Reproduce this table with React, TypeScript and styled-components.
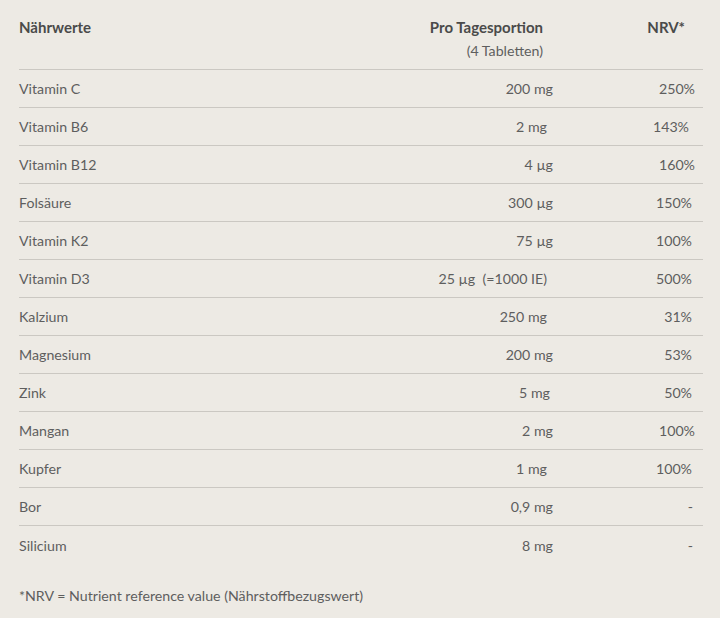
import React from "react";
import styled, { createGlobalStyle } from "styled-components";

const Global = createGlobalStyle`
  html, body { margin: 0; padding: 0; background: #edeae4; }
  body { font-family: Lato, "Noto Sans", sans-serif; }
`;

const Page = styled.div`
  width: 720px;
  height: 618px;
  background: #edeae4;
  padding: 0 17px 0 19px;
  box-sizing: border-box;
  color: #5e5e5e;
  font-size: 14.2px;
`;

const Table = styled.div`
  display: flex;
  flex-direction: column;
`;

const HeaderRow = styled.div`
  display: grid;
  grid-template-columns: 1fr 150px 150px;
  padding: 16px 0 7px;
  border-bottom: 1px solid #cbc8c2;
  line-height: 23px;
`;

const HeadCell = styled.div<{ $right?: boolean; $pr?: number }>`
  font-weight: 700;
  font-size: 15px;
  color: #4a4a4a;
  text-align: ${(p) => (p.$right ? "right" : "left")};
  padding-right: ${(p) => p.$pr ?? 0}px;
`;

const SubLine = styled.div`
  font-weight: 400;
  font-size: 14.2px;
  color: #5e5e5e;
`;

const Row = styled.div<{ $last?: boolean }>`
  display: grid;
  grid-template-columns: 1fr 150px 150px;
  align-items: center;
  height: 38px;
  box-sizing: border-box;
  border-bottom: ${(p) => (p.$last ? "none" : "1px solid #cbc8c2")};
`;

const NameCell = styled.div``;

const ValueCell = styled.div<{ $pr: number }>`
  text-align: right;
  padding-right: ${(p) => p.$pr}px;
  white-space: pre;
`;

const Footnote = styled.p`
  margin: 0;
  padding-top: 21px;
  line-height: 22px;
`;

type Item = { name: string; amount: string; ap: number; nrv: string; np: number };

const items: Item[] = [
  { name: "Vitamin C", amount: "200 mg", ap: 0, nrv: "250%", np: 8 },
  { name: "Vitamin B6", amount: "2 mg", ap: 6, nrv: "143%", np: 14 },
  { name: "Vitamin B12", amount: "4 µg", ap: 0, nrv: "160%", np: 8 },
  { name: "Folsäure", amount: "300 µg", ap: 0, nrv: "150%", np: 11 },
  { name: "Vitamin K2", amount: "75 µg", ap: 0, nrv: "100%", np: 11 },
  { name: "Vitamin D3", amount: "25 µg  (=1000 IE)", ap: 6, nrv: "500%", np: 11 },
  { name: "Kalzium", amount: "250 mg", ap: 6, nrv: "31%", np: 11 },
  { name: "Magnesium", amount: "200 mg", ap: 0, nrv: "53%", np: 11 },
  { name: "Zink", amount: "5 mg", ap: 3, nrv: "50%", np: 11 },
  { name: "Mangan", amount: "2 mg", ap: 0, nrv: "100%", np: 8 },
  { name: "Kupfer", amount: "1 mg", ap: 6, nrv: "100%", np: 11 },
  { name: "Bor", amount: "0,9 mg", ap: 0, nrv: "-", np: 10 },
  { name: "Silicium", amount: "8 mg", ap: 0, nrv: "-", np: 10 },
];

export default function App() {
  return (
    <>
      <Global />
      <Page>
        <Table>
          <HeaderRow>
            <HeadCell>Nährwerte</HeadCell>
            <HeadCell $right $pr={10}>
              Pro Tagesportion
              <SubLine>(4 Tabletten)</SubLine>
            </HeadCell>
            <HeadCell $right $pr={18}>NRV*</HeadCell>
          </HeaderRow>
          {items.map((it, i) => (
            <Row key={it.name} $last={i === items.length - 1}>
              <NameCell>{it.name}</NameCell>
              <ValueCell $pr={it.ap}>{it.amount}</ValueCell>
              <ValueCell $pr={it.np}>{it.nrv}</ValueCell>
            </Row>
          ))}
        </Table>
        <Footnote>*NRV = Nutrient reference value (Nährstoffbezugswert)</Footnote>
      </Page>
    </>
  );
}
